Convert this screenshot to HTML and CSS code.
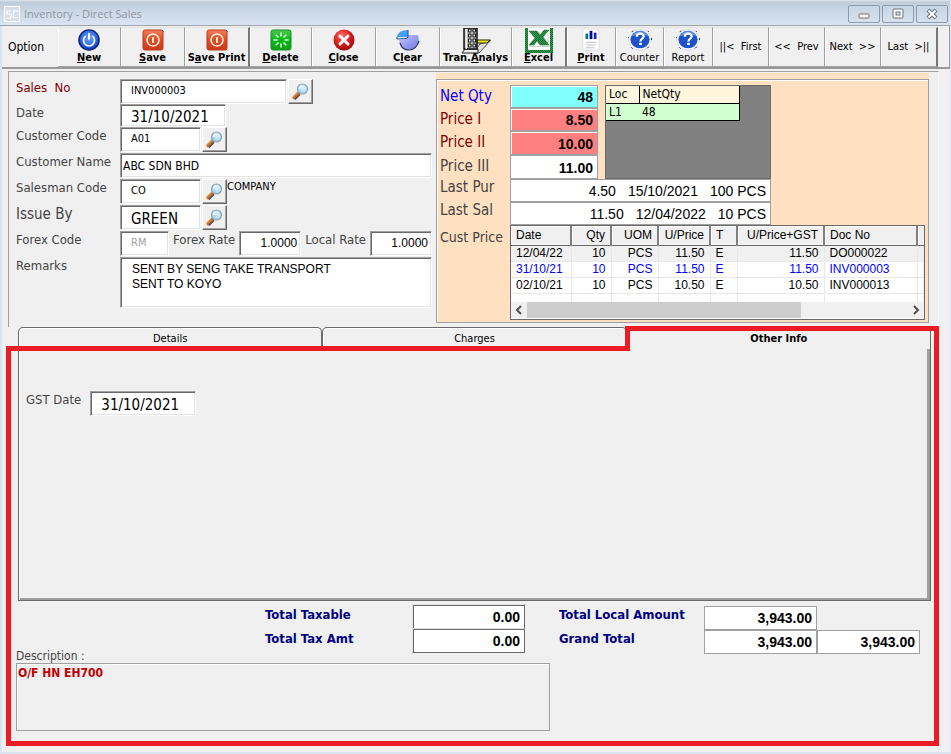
FILE: index.html
```html
<!DOCTYPE html>
<html lang="en">
<head>
<meta charset="utf-8">
<title>Inventory - Direct Sales</title>
<link rel="stylesheet" href="styles.css">
</head>
<body>
<svg class="defs" aria-hidden="true">
  <defs>
    <linearGradient id="redGrad" x1="0" y1="0" x2="0" y2="1"><stop offset="0" stop-color="#f0805c"/><stop offset=".5" stop-color="#e04a22"/><stop offset="1" stop-color="#c93a18"/></linearGradient>
    <radialGradient id="blueGrad" cx=".5" cy=".4" r=".6"><stop offset="0" stop-color="#6fa8f8"/><stop offset=".7" stop-color="#2a62dc"/><stop offset="1" stop-color="#0a2a9c"/></radialGradient>
    <radialGradient id="closeGrad" cx=".4" cy=".3" r=".8"><stop offset="0" stop-color="#ff7068"/><stop offset=".5" stop-color="#dc1c20"/><stop offset="1" stop-color="#8c0008"/></radialGradient>
    <linearGradient id="greenGrad" x1="0" y1="0" x2="0" y2="1"><stop offset="0" stop-color="#4cc850"/><stop offset=".5" stop-color="#08b818"/><stop offset="1" stop-color="#10a018"/></linearGradient>
    <linearGradient id="pieGrad" x1="0" y1="0" x2="1" y2="1"><stop offset="0" stop-color="#c4c8ff"/><stop offset="1" stop-color="#7078e0"/></linearGradient>
    <linearGradient id="handleGrad" x1="0" y1="0" x2="1" y2="1"><stop offset="0" stop-color="#f8b868"/><stop offset=".5" stop-color="#d07828"/><stop offset="1" stop-color="#503840"/></linearGradient>
    <radialGradient id="lensGrad" cx=".6" cy=".4" r=".6"><stop offset="0" stop-color="#e4f6fe"/><stop offset="1" stop-color="#98cce8"/></radialGradient>
    <pattern id="check" width="2" height="2" patternUnits="userSpaceOnUse"><rect width="2" height="2" fill="#30a048"/><rect width="1" height="1" fill="#186838"/><rect x="1" y="1" width="1" height="1" fill="#186838"/></pattern>
    <symbol id="save" viewBox="0 0 22 22"><rect x="1" y="1" width="20" height="20" rx="2" fill="url(#redGrad)" stroke="#c03818"/><path d="M20 1l1.500 1.500" stroke="#201010"/><circle cx="11" cy="11" r="6" fill="none" stroke="#ffe8dc" stroke-width="1.600"/><path d="M11 8v6" stroke="#ffe8dc" stroke-width="2"/></symbol>
    <symbol id="lens" viewBox="0 0 18 18"><path d="M3 14.500L8 9.500" stroke="url(#handleGrad)" stroke-width="3.600" stroke-linecap="round"/><path d="M4 16.500L9 11.500" stroke="#504050" stroke-width="1.200"/><circle cx="11.500" cy="6" r="5" fill="url(#lensGrad)" stroke="#8ca4b8" stroke-width="1.200"/><path d="M8.500 6a3 3 0 013-3" fill="none" stroke="#fff" stroke-width="1.400"/></symbol>
    <symbol id="help" viewBox="0 0 28 24"><ellipse cx="14" cy="12" rx="12.500" ry="11" fill="#f8f7fd" stroke="#cfc8e6" stroke-dasharray="3 2"/><path d="M5 3l1.500-1M22.500 2l1 1M26.500 10v2M22 21l1.500-1.500M4.500 20l1.500 1.500M1.500 9v1" stroke="#101030" stroke-width="1"/><ellipse cx="14" cy="11.500" rx="10.500" ry="9.500" fill="#1c54c8"/><path d="M5 8Q9 1.500 15 2.500t7.500 5Q14 5 5 8z" fill="#6c98e8"/><path d="M10.500 8.500c0-4.500 7.500-4.500 7.500-.5 0 2.500-3.500 2.500-3.500 5.500" fill="none" stroke="#fff" stroke-width="2.400"/><rect x="13" y="15" width="3" height="2.500" fill="#fff"/></symbol>
  </defs>
</svg>
<div class="window">
  <header class="titlebar">
    <svg class="app-icon" viewBox="0 0 16 16" aria-hidden="true"><rect x=".5" y=".5" width="15" height="15" fill="#d5dfe9" stroke="#fff"/><path d="M7 5H3v3h4v4H2.500M14 5H9.500v6.500H14" fill="none" stroke="#fff" stroke-width="1.200"/></svg>
    <h1>Inventory - Direct Sales</h1>
    <div class="controls">
      <button type="button" aria-label="Minimize"><svg viewBox="0 0 14 12"><rect x="2" y="6" width="10" height="4" rx="1" fill="#fff" stroke="#667080"/></svg></button>
      <button type="button" aria-label="Maximize"><svg viewBox="0 0 14 12"><rect x="2" y="1" width="10" height="9" rx="1" fill="#fff" stroke="#667080"/><rect x="5" y="4" width="4" height="3" fill="#dde5ee" stroke="#667080"/></svg></button>
      <button type="button" aria-label="Close window"><svg viewBox="0 0 14 12"><path d="M3 2l8 8M11 2l-8 8" stroke="#667080" stroke-width="4"/><path d="M3.500 2.500l7 7M10.500 2.500l-7 7" stroke="#fff" stroke-width="2"/></svg></button>
    </div>
  </header>

  <nav class="toolbar" aria-label="Option">
    <span class="option">Option</span>
    <button type="button"><svg viewBox="0 0 24 24"><circle cx="12" cy="12" r="11" fill="url(#blueGrad)" stroke="#08207c" stroke-width="1.500"/><path d="M8.500 7.500a6 6 0 107 0" fill="none" stroke="#e8f4ff" stroke-width="2"/><path d="M12 4.500v7" stroke="#fff" stroke-width="2.200"/></svg><span><u>N</u>ew</span></button>
    <button type="button"><svg><use href="#save"/></svg><span><u>S</u>ave</span></button>
    <button type="button" class="group-end"><svg><use href="#save"/></svg><span>S<u>a</u>ve Print</span></button>
    <button type="button"><svg viewBox="0 0 22 22"><rect x="1" y="1" width="20" height="20" rx="2" fill="url(#greenGrad)" stroke="#109020"/><path d="M11 3.500v4M11 14.500v4M3.500 11h4M14.500 11h4M5.700 5.700l2.800 2.800M13.500 13.500l2.800 2.800M5.700 16.300l2.800-2.800M13.500 8.500l2.800-2.800" stroke="#d8ffd8" stroke-width="1.600"/></svg><span><u>D</u>elete</span></button>
    <button type="button"><svg viewBox="0 0 22 22"><circle cx="11" cy="11" r="10.500" fill="url(#closeGrad)"/><path d="M7 7l8 8M15 7l-8 8" stroke="#fff" stroke-width="3" stroke-linecap="round"/></svg><span><u>C</u>lose</span></button>
    <button type="button"><svg class="pie" viewBox="0 0 24 22"><path d="M12 6h10q2 5-1 9.500T12 21Q4 20 3 11l7-1z" fill="url(#pieGrad)"/><path d="M4 14q2 7 9 7t10-9" fill="none" stroke="#30306c" stroke-width="1.200"/><path d="M1 8Q2 1 12 1v7z" fill="#48a0f0"/><path d="M1 8v2l10-.5 1-1.500V1" fill="none" stroke="#1c50a0"/></svg><span>C<u>l</u>ear</span></button>
    <button type="button"><svg class="tall" viewBox="0 0 30 26"><path d="M12 25l7-9 11-4-12 13z" fill="#ddd" stroke="#555"/><path d="M16 12h13l-3 3H16z" fill="#f8f000" stroke="#202000"/><path d="M1 25l3-4h13v4z" fill="#eee" stroke="#222"/><path d="M3 0h13v21H3z" fill="#b8b8b8" stroke="#111" stroke-width="1.500"/><path d="M4.500 1h1.500v20H4.500z" fill="#eee"/><path d="M7.500 1h2.500v3H7.500zM12 1h2.500v3H12zM7.500 6h2.500v3H7.500zM12 6h2.500v3H12zM7.500 11h2.500v3H7.500zM12 11h2.500v3H12zM7.500 16h2.500v3H7.500zM12 16h2.500v3H12z" fill="#fff" stroke="#111"/></svg><span>Tran.<u>A</u>nalys</span></button>
    <button type="button" class="group-end"><svg class="tall" viewBox="0 0 30 26"><path d="M2.500 0v23.500h25V0" fill="#fff" stroke="url(#check)" stroke-width="3"/><path d="M24 6v9M5 18.500h20" stroke="#ccc"/><path d="M5 3h8l3 4 4-5h5l-6 7 6 8h-9l-3-4-3 4H5l6-7z" fill="url(#check)" stroke="#2c7c40" stroke-width=".6"/></svg><span><u>E</u>xcel</span></button>
    <button type="button"><svg viewBox="0 0 22 24"><path d="M2 0h14l4 3v20H2z" fill="#fff" stroke="#ddd"/><rect x="5" y="5" width="3" height="6" fill="#007c78"/><rect x="9.500" y="2" width="3" height="9" fill="#0000a0"/><rect x="14" y="4" width="3" height="7" fill="#1828c0"/><path d="M5 14.500h12M5 17.500h11M5 20.500h10" stroke="#b8b8c4"/></svg><span><u>P</u>rint</span></button>
    <button type="button" class="plain"><svg class="wide"><use href="#help"/></svg><span>Counter</span></button>
    <button type="button" class="plain"><svg class="wide"><use href="#help"/></svg><span>Report</span></button>
    <button type="button" class="step">||&lt;&nbsp; First</button>
    <button type="button" class="step">&lt;&lt;&nbsp; Prev</button>
    <button type="button" class="step">Next&nbsp; &gt;&gt;</button>
    <button type="button" class="step group-end">Last&nbsp; &gt;||</button>
  </nav>

  <main>
    <section class="upper">
      <form class="entry">
        <label for="sales" class="maroon">Sales&nbsp; No</label>
        <div class="field"><input id="sales" class="w-sales small" value="INV000003"><button type="button" aria-label="Find sale"><svg><use href="#lens"/></svg></button></div>
        <label for="date">Date</label>
        <div class="field"><input id="date" class="w-date big" value="31/10/2021"></div>
        <label for="ccode">Customer Code</label>
        <div class="field"><input id="ccode" class="w-code small" value="A01"><button type="button" aria-label="Find customer"><svg><use href="#lens"/></svg></button></div>
        <label for="cname">Customer Name</label>
        <div class="field"><input id="cname" class="w-full" value="ABC SDN BHD"></div>
        <label for="sman">Salesman Code</label>
        <div class="field"><input id="sman" class="w-code small" value="CO"><button type="button" aria-label="Find salesman"><svg><use href="#lens"/></svg></button><span class="company">COMPANY</span></div>
        <label for="issue" class="large">Issue By</label>
        <div class="field"><input id="issue" class="w-code big" value="GREEN"><button type="button" aria-label="Find issuer"><svg><use href="#lens"/></svg></button></div>
        <label for="forex">Forex Code</label>
        <div class="field rates"><input id="forex" class="w-rm small" value="RM" disabled><label for="frate">Forex Rate</label><input id="frate" class="rate" value="1.0000"><label for="lrate">Local Rate</label><input id="lrate" class="rate" value="1.0000"></div>
        <label for="remarks">Remarks</label>
        <textarea id="remarks">SENT BY SENG TAKE TRANSPORT
SENT TO KOYO</textarea>
      </form>

      <section class="pricing" aria-label="Pricing">
        <div class="price-frame">
          <label for="netqty" class="blue">Net Qty</label><input id="netqty" class="price cyan" value="48" readonly>
          <label for="p1" class="maroon">Price I</label><input id="p1" class="price pink" value="8.50" readonly>
          <label for="p2" class="maroon">Price II</label><input id="p2" class="price pink" value="10.00" readonly>
          <label for="p3">Price III</label><input id="p3" class="price" value="11.00" readonly>
          <div class="stock"><table>
            <thead><tr><th>Loc</th><th>NetQty</th></tr></thead>
            <tbody><tr><td>L1</td><td>48</td></tr></tbody>
          </table></div>
          <span class="tag">Last Pur</span><p class="last"><span>4.50</span><span>15/10/2021</span><span>100 PCS</span></p>
          <span class="tag">Last Sal</span><p class="last"><span>11.50</span><span>12/04/2022</span><span>10 PCS</span></p>
          <span class="tag cust">Cust Price</span>
          <div class="history">
            <table>
              <colgroup><col class="c-date"><col class="c-qty"><col class="c-uom"><col class="c-price"><col class="c-t"><col class="c-gst"><col class="c-doc"><col></colgroup>
              <thead><tr><th>Date</th><th class="r">Qty</th><th class="r">UOM</th><th class="r">U/Price</th><th>T</th><th class="r">U/Price+GST</th><th>Doc No</th><th></th></tr></thead>
              <tbody>
                <tr class="selected"><td>12/04/22</td><td class="r">10</td><td class="r">PCS</td><td class="r">11.50</td><td>E</td><td class="r">11.50</td><td>DO000022</td><td></td></tr>
                <tr class="current"><td>31/10/21</td><td class="r">10</td><td class="r">PCS</td><td class="r">11.50</td><td>E</td><td class="r">11.50</td><td>INV000003</td><td></td></tr>
                <tr><td>02/10/21</td><td class="r">10</td><td class="r">PCS</td><td class="r">10.50</td><td>E</td><td class="r">10.50</td><td>INV000013</td><td></td></tr>
                <tr class="blank"><td></td><td></td><td></td><td></td><td></td><td></td><td></td><td></td></tr>
              </tbody>
            </table>
            <div class="scroll">
              <svg viewBox="0 0 16 16"><path d="M10 4L6 8l4 4" fill="none" stroke="#505050" stroke-width="2"/></svg>
              <div class="track"><div class="thumb"></div></div>
              <svg viewBox="0 0 16 16"><path d="M6 4l4 4-4 4" fill="none" stroke="#505050" stroke-width="2"/></svg>
            </div>
          </div>
        </div>
      </section>
    </section>

    <section class="lower">
      <div class="tabs" role="tablist">
        <button type="button" role="tab">Details</button>
        <button type="button" role="tab">Charges</button>
        <button type="button" role="tab" aria-selected="true">Other Info</button>
      </div>
      <div class="tab-page" role="tabpanel">
        <label for="gst">GST Date</label>
        <input id="gst" class="w-date big" value="31/10/2021">
      </div>
      <div class="totals">
        <div class="total-labels"><label for="taxable">Total Taxable</label><label for="taxamt">Total Tax Amt</label></div>
        <div class="total-values tax"><input id="taxable" value="0.00" readonly><input id="taxamt" value="0.00" readonly></div>
        <div class="total-labels second"><label for="local">Total Local Amount</label><label for="grand">Grand Total</label></div>
        <div class="total-values sums"><input id="local" value="3,943.00" readonly><input id="grand" value="3,943.00" readonly><input id="grand-local" aria-label="Grand total, local" value="3,943.00" readonly></div>
      </div>
      <div class="description">
        <label for="desc">Description :</label>
        <textarea id="desc">O/F HN EH700</textarea>
      </div>
      <div class="outline" aria-hidden="true"><i class="o-left"></i><i class="o-right"></i><i class="o-body"></i></div>
    </section>
  </main>
</div>
</body>
</html>
```
FILE: styles.css
```css
* { box-sizing: border-box; }
body {
  margin: 0;
  background: #f0f0f0;
  color: #000;
  font: 12px/16px "DejaVu Sans Condensed", Tahoma, "DejaVu Sans", sans-serif;
}
button, input, textarea { font: inherit; color: inherit; margin: 0; border-radius: 0; }
button { padding: 0; }
.defs { position: absolute; width: 0; height: 0; }

.window {
  min-height: 100vh;
  display: flex;
  flex-direction: column;
  border: solid #d9e4f1;
  border-width: 0 1px 2px 2px;
}

/* Title bar */
.titlebar {
  height: 26px;
  margin-left: -2px;
  padding: 2px 2px 0 4px;
  display: flex;
  align-items: center;
  background: linear-gradient(#dfe7ee 0, #bfcddb 2px, #d9e5f2 100%);
  border-bottom: 1px solid #a0a4a8;
}
.app-icon { width: 16px; height: 16px; }
h1 {
  margin: 0 0 0 4px;
  flex: 1;
  font: 11px/16px "Open Sans", "Noto Sans", sans-serif;
  color: #90969e;
}
.controls { display: flex; gap: 2px; }
.controls button {
  width: 32px;
  height: 18px;
  display: flex;
  align-items: center;
  justify-content: center;
  border: 1px solid #8d9bac;
  border-radius: 2px;
  background: linear-gradient(#c8d5e3, #d5e1ee);
}
.controls svg { width: 14px; height: 12px; }

/* Toolbar */
.toolbar {
  height: 43px;
  display: grid;
  grid-template-columns: 56fr 63fr 64fr 65fr 62fr 64fr 64fr 72fr 55fr 49fr 48fr 49fr 56fr 56fr 56fr 57fr 11fr;
  border: solid #999;
  border-width: 0 1px 2px 0;
  padding-top: 1px;
}
.option { padding: 12px 0 0 6px; }
.toolbar button {
  min-width: 0;
  display: flex;
  flex-direction: column;
  align-items: center;
  border: solid #a0a0a0;
  border-width: 1px 1px 1px 0;
  border-top-color: #e4e4e4;
  box-shadow: inset 1px 0 #fff;
  background: #f0f0f0;
  font-size: 11px;
  font-weight: bold;
  white-space: nowrap;
}
.toolbar button.group-end { border-right: 2px solid #777; }
.toolbar svg { width: 22px; height: 22px; margin-top: 1px; flex: none; }
.toolbar svg.wide { width: 28px; }
.toolbar svg.pie { width: 24px; }
.toolbar svg.tall { width: 30px; height: 26px; margin: 0 0 -3px; }
.toolbar button span { line-height: 14px; }
.toolbar .plain, .toolbar .step { font-weight: normal; }
.toolbar .step { justify-content: center; }

/* Upper half */
main { flex: 1; display: flex; flex-direction: column; padding: 2px 11px 0 4px; }
.upper {
  display: grid;
  grid-template-columns: 427fr 493fr 9fr;
  height: 256px;
  margin-left: 2px;
  border: solid #a0a0a0;
  border-width: 1px 1px 0 1px;
  border-right-color: #fff;
}
.entry {
  display: grid;
  grid-template-columns: 104px 1fr;
  grid-template-rows: 25px 23px repeat(5, 26px) 51px;
  padding: 7px 4px 0 7px;
}
label, .tag { color: #444; font-size: 13px; line-height: 18px; white-space: nowrap; }
.large { font-size: 15px; }
label.maroon { color: #800000; }
label.blue { color: #0000ff; }

input, textarea {
  border: 1px solid;
  border-color: #a0a0a0 #fff #fff #a0a0a0;
  box-shadow: inset 1px 1px #696969, inset -1px -1px #e3e3e3;
  background: #fff;
  padding: 0 4px 0 2px;
  min-width: 0;
  outline: 0;
}
.field { display: flex; min-width: 0; }
.field input { height: 25px; }
.field button {
  width: 25px;
  height: 25px;
  margin-left: 1px;
  border: 1px solid;
  border-color: #fff #696969 #696969 #fff;
  box-shadow: inset -1px -1px #a0a0a0;
  background: #f0f0f0;
}
.field button svg { width: 18px; height: 18px; display: block; margin: 0 0 0 2px; }
.small { font-size: 11px; padding: 0 0 2px 10px; }
.big { font-size: 15px; padding: 2px 0 0 10px; }
.w-sales { width: 167px; }
.field .w-date { height: 23px; }
.w-date { width: 106px; }
.w-code { width: 81px; }
.w-full { width: 100%; }
.w-rm { width: 49px; color: #a0a0a0; }
.company { font-size: 11px; }
.rates { justify-content: space-between; }
.rate { width: 62px; text-align: right; font-size: 12px; padding: 0 3px 2px; font-family: "Liberation Sans", sans-serif; }
#remarks {
  width: 100%;
  height: 51px;
  padding: 4px 11px;
  font: 12px/15px "Liberation Sans", sans-serif;
  resize: none;
}

/* Pricing */
.pricing { background: #ffe0c0; margin-top: 1px; padding-top: 6px; height: 250px; }
.price-frame {
  display: grid;
  grid-template-columns: 70px 88px 173px 1fr;
  grid-template-rows: 23px 23px 24px 24px 23px 23px 95px;
  height: 244px;
  padding: 5px 3px 0 3px;
  border: 1px solid #a0a0a0;
  box-shadow: inset 1px 1px #fff;
}
.price-frame label, .price-frame .tag { grid-column: 1; font-size: 15px; line-height: 22px; }
.price-frame .tag { line-height: 16px; }
.price-frame .cust { line-height: 24px; font-size: 14px; }
.price {
  grid-column: 2;
  text-align: right;
  font: bold 14px "Liberation Sans", sans-serif;
  border-color: #a0a0a0;
  box-shadow: inset 1px 1px #fff;
  padding: 1px 4px 0;
}
.cyan { background: #80ffff; }
.pink { background: #ff8080; }
.stock {
  grid-column: 3;
  grid-row: 1 / 5;
  margin-left: 7px;
  border: 1px solid #696969;
  background: #808080;
}
table { border-collapse: collapse; table-layout: fixed; }
th, td { padding: 0; font-weight: normal; text-align: left; }
.stock table { width: 134px; border-right: 1px solid #000; }
.stock th { background: #fdf5dc; height: 17px; padding-left: 3px; border: solid #000; border-width: 0 1px 1px 0; }
.stock td { background: #d0ffd0; height: 17px; padding-left: 3px; border-bottom: 1px solid #000; }
.stock th:first-child { width: 33px; }
.last {
  grid-column: 2 / 4;
  margin: 0;
  display: flex;
  justify-content: flex-end;
  gap: 12px;
  padding: 3px 4px 0 0;
  background: #fff;
  border: 1px solid #a0a0a0;
  font: 14px/17px "Liberation Sans", sans-serif;
}
.history {
  grid-column: 2 / 5;
  border: 1px solid #696969;
  background: #fff;
  font: 12px/15px "Liberation Sans", sans-serif;
}
.history table { width: 100%; }
.c-date { width: 60px; }
.c-qty { width: 40px; }
.c-uom { width: 47px; }
.c-price { width: 52px; }
.c-t { width: 27px; }
.c-gst { width: 87px; }
.c-doc { width: 93px; }
.history th { height: 19px; background: #f0f0f0; border-right: 2px solid #808080; border-bottom: 1px solid #696969; padding: 0 5px; box-shadow: inset 1px 1px #fff; }
.history th:last-child { border-right: 0; }
.history td { height: 16px; padding: 0 5px; border: solid #e8e8e8; border-width: 0 1px 1px 0; }
.history .r { text-align: right; padding: 0 5px 0 0; }
.history .selected td { background: #f0f0f0; }
.current { color: #0000ff; }
.history .blank td { height: 9px; border-bottom: 0; }
.scroll { display: flex; height: 16px; background: #f0f0f0; }
.scroll svg { width: 16px; height: 16px; }
.track { flex: 1; }
.thumb { width: 72%; height: 16px; background: #cdcdcd; }

/* Lower half */
.lower { position: relative; flex: 1; display: flex; flex-direction: column; padding: 0 8px 6px 12px; }
.tabs { display: grid; grid-template-columns: 1fr 1fr 1fr; height: 22px; }
.tabs button {
  font-size: 11px;
  border: 1px solid #696969;
  border-bottom: 0;
  border-radius: 5px 5px 0 0;
  background: #f0f0f0;
  box-shadow: inset 1px 1px #fff;
}
.tabs button[aria-selected] { font-weight: bold; }
.tab-page {
  flex: 1;
  min-height: 240px;
  display: flex;
  align-items: flex-start;
  gap: 9px;
  padding: 42px 8px 0 7px;
  border: 1px solid #696969;
  border-top: 0;
  box-shadow: inset 1px 0 #fff, inset -3px -2px #a0a0a0;
}
.tab-page input { height: 25px; }
.totals {
  display: grid;
  grid-template-columns: 147fr 113fr 179fr 216fr 11fr;
  padding: 3px 0 0 247px;
}
.total-labels { display: flex; flex-direction: column; padding-top: 2px; }
.total-labels.second { padding-left: 34px; }
.total-labels label { font-size: 13px; font-weight: bold; color: #000080; height: 24px; line-height: 18px; }
.total-values input { font: bold 14px "Liberation Sans", sans-serif; text-align: right; height: 25px; }
.tax { display: grid; grid-template-rows: 24px 25px; }
.tax input { width: 100%; border-color: #e3e3e3 #696969 #696969 #e3e3e3; box-shadow: inset 1px 1px #696969; }
.sums { display: grid; grid-template-columns: 113fr 103fr; grid-template-rows: 24px 25px; padding-top: 2px; }
.sums input { height: 24px; width: 100%; border-color: #a0a0a0; box-shadow: none; }
#local { grid-area: 1 / 1; }
#grand { grid-area: 2 / 1; }
#grand-local { grid-area: 2 / 2; }
.description { width: 60%; margin: -6px 0 0 -2px; padding-bottom: 15px; }
.description label { display: block; font-size: 12px; line-height: 14px; }
#desc {
  display: block;
  width: 534px;
  max-width: 100%;
  height: 68px;
  padding: 1px;
  resize: none;
  background: #f0f0f0;
  border-color: #a0a0a0;
  box-shadow: inset 1px 1px #fff;
  color: #c00000;
  font-weight: bold;
}

/* Red highlight laid over the active tab and its page */
.outline {
  position: absolute;
  inset: -1px 0 6px 0;
  display: grid;
  grid-template-columns: 624fr 309fr;
  grid-template-rows: 25px 1fr;
  pointer-events: none;
}
.outline i { border: 0 solid #ed1c24; }
.outline .o-left { border-bottom-width: 5px; }
.outline .o-right { border-width: 5px 5px 0 0; position: relative; }
.outline .o-right::before { content: ""; position: absolute; inset: -5px auto 0 -5px; width: 5px; background: #ed1c24; }
.outline .o-body { grid-column: 1 / 3; border-width: 0 5px 5px 5px; }
```
